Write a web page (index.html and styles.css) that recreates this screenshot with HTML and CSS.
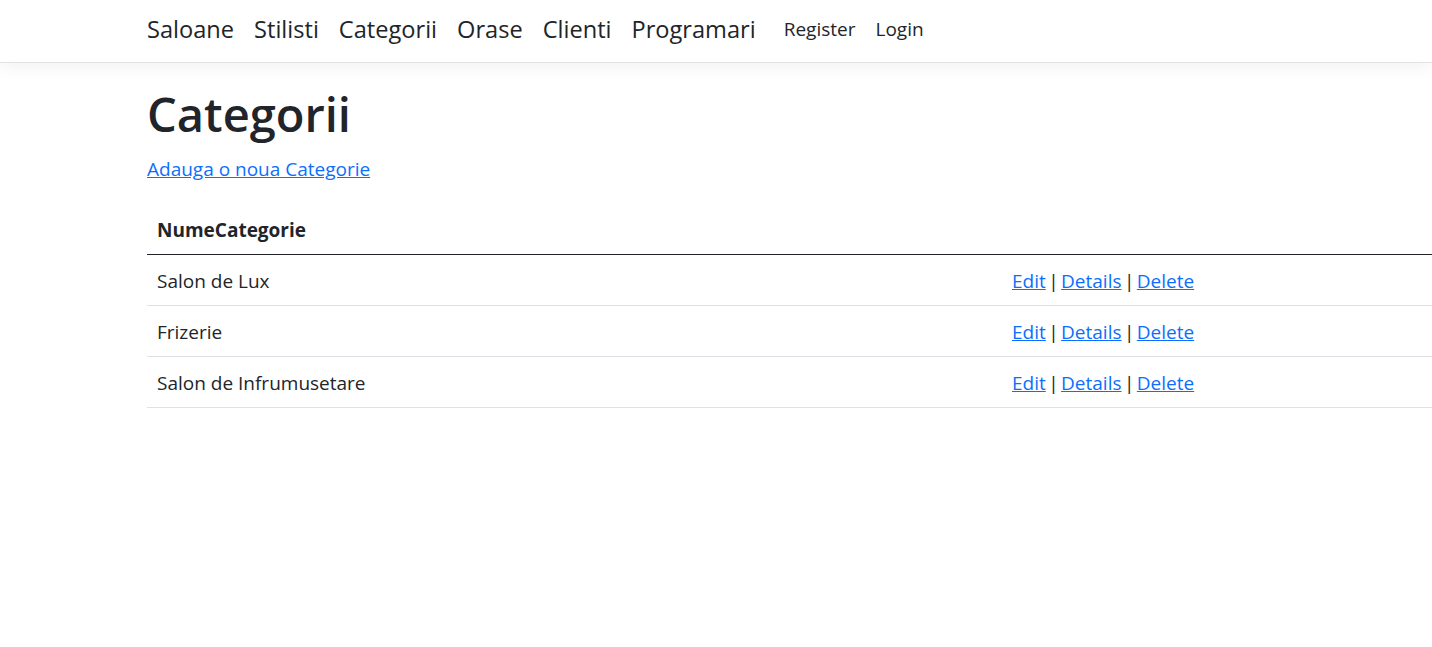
FILE: index.html
```html
<!DOCTYPE html>
<html lang="ro">
<head>
<meta charset="utf-8">
<title>Categorii</title>
<link rel="stylesheet" href="styles.css">
</head>
<body>
<header class="navbar">
  <div class="nav-inner">
    <nav class="nav-main">
      <a class="nav-link" href="#">Saloane</a>
      <a class="nav-link" href="#">Stilisti</a>
      <a class="nav-link" href="#">Categorii</a>
      <a class="nav-link" href="#">Orase</a>
      <a class="nav-link" href="#">Clienti</a>
      <a class="nav-link" href="#">Programari</a>
    </nav>
    <nav class="nav-auth">
      <a class="auth-link" href="#">Register</a>
      <a class="auth-link" href="#">Login</a>
    </nav>
  </div>
</header>
<main class="content">
  <h1 class="title">Categorii</h1>
  <p class="create"><a href="#">Adauga o noua Categorie</a></p>
  <table class="table">
    <colgroup><col class="col-name"><col class="col-actions"></colgroup>
    <thead>
      <tr><th>NumeCategorie</th><th></th></tr>
    </thead>
    <tbody>
      <tr><td>Salon de Lux</td><td class="actions"><a href="#">Edit</a> | <a href="#">Details</a> | <a href="#">Delete</a></td></tr>
      <tr><td>Frizerie</td><td class="actions"><a href="#">Edit</a> | <a href="#">Details</a> | <a href="#">Delete</a></td></tr>
      <tr><td>Salon de Infrumusetare</td><td class="actions"><a href="#">Edit</a> | <a href="#">Details</a> | <a href="#">Delete</a></td></tr>
    </tbody>
  </table>
</main>
</body>
</html>
```

FILE: styles.css
```css
html, body {
  margin: 0;
  padding: 0;
  overflow-x: hidden;
  background: #fff;
}
body {
  font-family: "Open Sans", "Noto Sans", "Liberation Sans", sans-serif;
  font-size: 19px;
  line-height: 30px;
  color: #212529;
}
a {
  color: #0d6efd;
}
.navbar {
  background: #fff;
  border-bottom: 1px solid #e3e3e3;
  box-shadow: 0 5px 15px rgba(0, 0, 0, 0.05);
  display: flex;
  align-items: center;
  padding-bottom: 4px;
  box-sizing: border-box;
  height: 63px;
}
.nav-inner {
  display: flex;
  align-items: center;
  padding-left: 137px;
}
.nav-main {
  display: flex;
}
.nav-link {
  font-size: 23.6px;
  color: #212529;
  text-decoration: none;
  padding: 0 10px;
  line-height: 36px;
}
.nav-auth {
  display: flex;
  margin-left: 8px;
}
.auth-link {
  font-size: 19px;
  color: #212529;
  text-decoration: none;
  padding: 0 10px;
  line-height: 30px;
}
.content {
  padding: 21px 0 0 147px;
}
.title {
  margin: 0 0 10px;
  font-size: 47px;
  line-height: 60px;
  font-weight: 600;
}
.create {
  margin: 0 0 20px;
  line-height: 30px;
}
.table {
  border-collapse: collapse;
  table-layout: fixed;
  width: 1320px;
}
.col-name { width: 855px; }
.table th, .table td {
  padding: 11px 10px 9px;
  text-align: left;
  vertical-align: top;
}
.table th {
  font-weight: 700;
  border-bottom: 1px solid #212529;
}
.table td {
  border-bottom: 1px solid #dee2e6;
}
.actions {
  word-spacing: -2.5px;
}
```
